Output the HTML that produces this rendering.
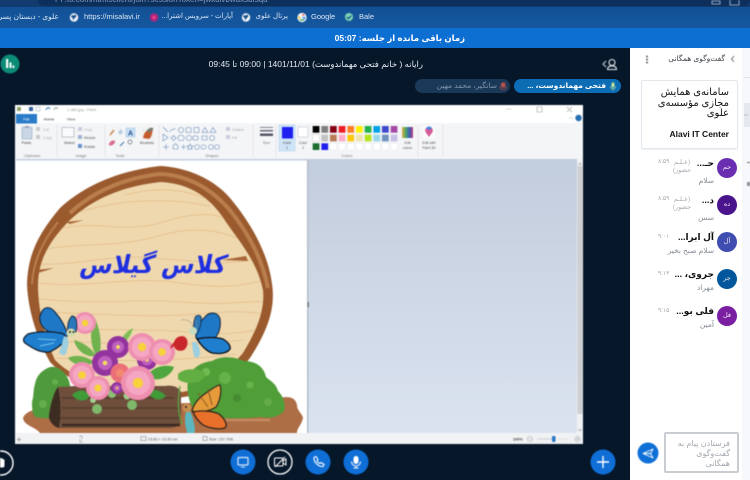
<!DOCTYPE html>
<html lang="fa">
<head>
<meta charset="utf-8">
<title>کلاس</title>
<style>
html,body{margin:0;padding:0;width:750px;height:480px;overflow:hidden;background:#06172a;font-family:"Liberation Sans","DejaVu Sans",sans-serif}
.a{position:absolute;white-space:nowrap;line-height:1}
.r{direction:rtl;text-align:right}
#art{position:absolute;left:0;top:0;filter:blur(.4px)}
.bm{color:#dbe6f2;font-size:7.5px;top:13px}
.nm{color:#111;font-weight:bold;font-size:9px;right:36px}
.ms{color:#868c93;font-size:7.5px;right:36px}
.tm{color:#a3a8ae;font-size:6px;left:658px}
.st{color:#a8adb3;font-size:6.5px;line-height:8px;left:667px;width:30px;white-space:normal;text-align:center;direction:rtl}
.av{position:absolute;left:717px;width:20px;height:20px;border-radius:50%;color:#f1e9f7;font-size:6.5px;line-height:20px;text-align:center;direction:rtl}
</style>
</head>
<body>
<!-- browser chrome -->
<div class="a" style="left:0;top:0;width:750px;height:7px;background:#123c70"></div>
<div class="a" style="left:38px;top:-6px;width:712px;height:12px;border-radius:6px;background:#0d2f5c"></div>
<div class="a" style="left:55px;top:-4px;color:#7f9bbd;font-size:8px">PP.to.com/html5client/join?sessionToken=jwkdlvbwdxsdfsqa</div>
<div class="a" style="left:0;top:7px;width:750px;height:21px;background:linear-gradient(#135095,#15589f)"></div>
<div class="a" style="left:0;top:28px;width:750px;height:20px;background:#0e6fd3"></div>

<div class="a r bm" style="right:691px;width:62px;overflow:hidden">علوی - دبستان پسرانه</div>
<div class="a bm" style="left:84px">https://misalavi.ir</div>
<div class="a r bm" style="left:163px;width:70px;font-size:7px">آپارات - سرویس اشترا...</div>
<div class="a r bm" style="left:254px;width:34px;font-size:7px">پرتال علوی</div>
<div class="a bm" style="left:311px">Google</div>
<div class="a bm" style="left:359px">Bale</div>

<div class="a r" style="left:300px;width:165px;top:34px;color:#fff;font-size:8.5px;font-weight:bold">زمان باقی مانده از جلسه: 05:07</div>

<!-- sidebar -->
<div class="a" style="left:630px;top:48px;width:112px;height:432px;background:#fff"></div>
<div class="a" style="left:742px;top:48px;width:8px;height:432px;background:#f6f8fb"></div>
<div class="a" style="left:744px;top:77px;width:6px;height:1px;background:#dfe3e9"></div>
<div class="a" style="left:744px;top:103px;width:6px;height:24px;background:#e4e8ef"></div>

<div class="a" style="left:660px;top:55px;width:65px;text-align:right;direction:rtl;color:#3d4248;font-size:7.5px">گفت‌وگوی همگانی</div>

<div class="a" style="left:641px;top:80px;width:95px;height:67px;border:1px solid #e3e6ea;border-radius:2px;box-shadow:0 1px 1px #eceff2"></div>
<div class="a r" style="left:645px;width:84px;top:88px;color:#111316;font-size:10px;line-height:10.5px;white-space:normal">سامانه‌ی همایش<br>مجازی مؤسسه‌ی<br>علوی</div>
<div class="a" style="left:645px;width:84px;top:130px;text-align:right;color:#111316;font-size:8.5px;font-weight:bold">Alavi IT Center</div>

<!-- messages -->
<div class="av" style="top:158px;background:#6a2fb0">حم</div>
<div class="a r nm" style="top:159px">حـ...</div>
<div class="a st" style="top:159px">(عـلـم حضور)</div>
<div class="a tm" style="top:159px">۸:۵۹</div>
<div class="a r ms" style="top:177px">سلام</div>

<div class="av" style="top:195px;background:#4a148c">ده</div>
<div class="a r nm" style="top:196px">د...</div>
<div class="a st" style="top:196px">(عـلـم حضور)</div>
<div class="a tm" style="top:196px">۸:۵۹</div>
<div class="a r ms" style="top:214px">سس</div>

<div class="av" style="top:232px;background:#3f4db0">آل</div>
<div class="a r nm" style="top:233px">آل ابرا...</div>
<div class="a tm" style="top:234px">۹:۰۱</div>
<div class="a r ms" style="top:247px">سلام صبح بخیر</div>

<div class="av" style="top:269px;background:#01579b">جر</div>
<div class="a r nm" style="top:270px">جروی، ...</div>
<div class="a tm" style="top:271px">۹:۱۳</div>
<div class="a r ms" style="top:284px">مهراد</div>

<div class="av" style="top:306px;background:#7b1fa2">فل</div>
<div class="a r nm" style="top:307px">فلی بو...</div>
<div class="a tm" style="top:308px">۹:۱۵</div>
<div class="a r ms" style="top:321px">آمین</div>

<div class="a" style="left:664px;top:432px;width:71px;height:37px;border:2px solid #c9cdd2;border-radius:2px;background:#fff"></div>
<div class="a r" style="left:668px;width:62px;top:439px;color:#a3a8ae;font-size:8px;line-height:10px;white-space:normal">فرستادن پیام به<br>گفت‌وگوی<br>همگانی</div>

<!-- header -->
<div class="a" dir="rtl" style="left:195px;width:228px;top:60px;text-align:right;color:#e6ebf0;font-size:8.5px">رایانه ( خانم فتحی مهماندوست) 1401/11/01 | 09:00 تا 09:45</div>

<div class="a" style="left:514px;top:79px;width:107px;height:14px;border-radius:7px;background:#0c6cb4"></div>
<div class="a r" style="left:522px;width:84px;top:82px;color:#fff;font-size:7.5px;font-weight:bold">فتحی مهماندوست، ...</div>
<div class="a" style="left:415px;top:79px;width:95px;height:14px;border-radius:7px;background:#1a3857"></div>
<div class="a r" style="left:420px;width:77px;top:82px;color:#7f95ad;font-size:7.5px">ساتگیر، محمد مهین</div>

<svg id="art" width="750" height="480" viewBox="0 0 750 480" xmlns="http://www.w3.org/2000/svg" font-family="Liberation Sans, DejaVu Sans, sans-serif">
<defs>
<linearGradient id="gr" x1="0" y1="0" x2="0" y2="1"><stop offset="0" stop-color="#c2cddd"/><stop offset="1" stop-color="#dbe3f0"/></linearGradient>
<linearGradient id="rb" x1="0" y1="0" x2="1" y2="0"><stop offset="0" stop-color="#e2b13c"/><stop offset=".35" stop-color="#4aa56a"/><stop offset=".7" stop-color="#3d59b8"/><stop offset="1" stop-color="#c43d7a"/></linearGradient>
<clipPath id="inner"><path d="M160 182C185 183 208 193 226 222C242 245 257 262 263 290C265 310 257 330 243 353C215 385 190 395 160 393C120 392 80 385 55 360C46 340 38 312 38 285C38 260 50 240 70 220C95 197 125 186 160 182Z"/></clipPath>
<g id="fl"><circle r="1" fill="#ee8fb0"/><circle r=".72" fill="#f4a6c2"/><circle r=".3" fill="#f7d23c"/></g>
<g id="pf"><circle r="1" fill="#93339e"/><circle r=".55" fill="#bd5fbe"/><circle r=".18" fill="#f0dc60"/></g>
</defs>

<!-- bookmark icons -->
<circle cx="349" cy="17" r="4" fill="#7fd6b0"/><path d="M347 17l1.500 1.600 2.800-3" stroke="#134c8e" fill="none" stroke-width="1.200"/>
<circle cx="302" cy="17.500" r="4.600" fill="#fff"/><path d="M302 14.600a3 3 0 0 1 2.200.9" stroke="#e04a3a" stroke-width="1.300" fill="none"/><path d="M299.600 16a3 3 0 0 0 0 3" stroke="#f2b90f" stroke-width="1.300" fill="none"/><path d="M300 19.400a3 3 0 0 0 4 0" stroke="#2fa64d" stroke-width="1.300" fill="none"/><path d="M302 17.500h2.800a3 3 0 0 1-.8 2" stroke="#4285f4" stroke-width="1.200" fill="none"/>
<circle cx="246" cy="17.500" r="4.200" fill="#f2f4f7"/><path d="M244 15l2 .6 1.600-1.500.6 2.500-2 2-1 1.800-.6-2.600-1.600-1Z" fill="#134c8e"/>
<circle cx="154" cy="17.500" r="4.200" fill="#b0257f"/><circle cx="154" cy="17.500" r="1.600" fill="#e8487f"/>
<circle cx="74" cy="17.500" r="4.200" fill="#f2f4f7"/><path d="M72 15l2 .6 1.600-1.500.6 2.500-2 2-1 1.800-.6-2.600-1.600-1Z" fill="#134c8e"/>
<path d="M712 1h8v3h-8z M730 0v5h9V0" stroke="#b7c7da" fill="none" stroke-width=".8"/>

<!-- top left app button -->
<circle cx="10" cy="64" r="9.500" fill="#0c8b76"/>
<path d="M6 59v9h2.200v-9Z M9.500 62.500v5.500h2v-5.500Z M12.500 65.500v2.500h1.800v-2.500Z" fill="#fff"/>

<!-- header user -->
<path d="M606 61l-3 3 3 3" stroke="#e3e8ee" stroke-width=".9" fill="none"/>
<circle cx="612" cy="62.500" r="3" stroke="#e3e8ee" stroke-width="1.100" fill="none"/>
<path d="M607.500 69.500c0-2.600 2-3.600 4.500-3.600s4.500 1 4.500 3.600Z" stroke="#e3e8ee" stroke-width="1.100" fill="none"/>
<rect x="611.500" y="82.500" width="3" height="5" rx="1.500" fill="#c5e89a"/><path d="M610.500 86.500a2.500 2.500 0 0 0 5 0M613 89v1.400" stroke="#c5e89a" stroke-width=".7" fill="none"/>
<rect x="501" y="82.500" width="4.500" height="5" rx="1.500" fill="#b6504e"/><path d="M500 86.500a3.200 3.200 0 0 0 6.400 0" stroke="#b6504e" stroke-width=".8" fill="none"/>

<!-- sidebar icons -->
<path d="M734 56l-2.500 3 2.500 3" stroke="#555" stroke-width=".8" fill="none"/>
<circle cx="647" cy="56.500" r=".9" fill="#333"/><circle cx="647" cy="59.500" r=".9" fill="#333"/><circle cx="647" cy="62.500" r=".9" fill="#333"/>
<circle cx="747" cy="115" r=".5" fill="#777"/><circle cx="745" cy="115" r=".5" fill="#777"/>
<rect x="747" y="162" width="3" height="1" fill="#666"/><rect x="747" y="182" width="3" height="4" fill="#8b9096"/>
<circle cx="648" cy="453" r="10.500" fill="#0e6fd6"/>
<path d="M643 453.500l10-4.500-2.500 4.500 2.500 4.500Z M650.500 453.500h-7" stroke="#fff" stroke-width=".9" fill="none" stroke-linejoin="round"/>

<!-- bottom buttons -->
<circle cx="1" cy="463" r="12" fill="none" stroke="#fff" stroke-width="1.400"/>
<path d="M-3 466v-5h1.500v-2.500h1.500v-.5h1.500v.5h1.500v1h1.500v6.500l-1 1.500h-4.500Z" fill="#fff"/>
<circle cx="243" cy="462" r="12.500" fill="#0f6fd7"/>
<rect x="238" y="457.500" width="10" height="7.500" rx="1" fill="none" stroke="#d6e8fb" stroke-width="1.200"/><path d="M241 467h4" stroke="#d6e8fb" stroke-width="1"/>
<circle cx="280" cy="462" r="12" fill="#06172a" stroke="#fff" stroke-width="1.300"/>
<rect x="274.500" y="458" width="8.500" height="8" rx="1" fill="none" stroke="#fff" stroke-width="1"/><path d="M283 461l3-2v6l-3-2M275 467l10-10" stroke="#fff" stroke-width="1" fill="none"/>
<circle cx="318" cy="462" r="12.500" fill="#0f6fd7"/>
<path d="M314 457.500l2-1 2 3-1 1.200c.5 1.300 1.500 2.300 2.800 2.800l1.200-1 3 2-1 2c-4.500.5-9.500-4.500-9-9Z" fill="none" stroke="#fff" stroke-width="1.100" stroke-linejoin="round"/>
<circle cx="356" cy="462" r="12.500" fill="#0f6fd7"/>
<rect x="353.500" y="456" width="5" height="8" rx="2.500" fill="#fff"/><path d="M351.500 461.500a4.500 4.500 0 0 0 9 0M356 466v2M353.500 468h5" stroke="#fff" stroke-width="1" fill="none"/>
<circle cx="603" cy="462" r="12.500" fill="#0f6fd7"/>
<path d="M597 462h12M603 456v12" stroke="#fff" stroke-width="1.400"/>

<!-- shared screen -->
<rect x="15" y="105" width="568" height="339" fill="#f4f5f7"/>
<rect x="15" y="105" width="568" height="9" fill="#fff"/>
<rect x="16" y="114" width="561" height="9" fill="#fff"/>
<rect x="16" y="114" width="21" height="9.500" fill="#2a7bc8"/>
<text x="26.500" y="120.500" font-size="4" fill="#fff" text-anchor="middle">File</text>
<text x="49" y="120.500" font-size="4" fill="#333" text-anchor="middle">Home</text>
<text x="71" y="120.500" font-size="4" fill="#555" text-anchor="middle">View</text>
<text x="67" y="111" font-size="4" fill="#9a9a9a">1.380.jpg - Paint</text>
<rect x="17" y="107" width="4" height="4" fill="#8fa36a"/><rect x="29" y="107" width="4" height="4" fill="#35609e"/><rect x="36" y="107" width="4" height="4" fill="none" stroke="#9aa" stroke-width=".5"/><path d="M46 110c1-3 3-3 4-1" stroke="#3a7bc0" fill="none"/><path d="M54 110c1-3 3-3 4-1" stroke="#9aa" fill="none"/>
<path d="M537 107h5v5h-5Z M567 107l5 5M572 107l-5 5" stroke="#9a9a9a" fill="none" stroke-width=".6"/><path d="M506 109h5" stroke="#bbb" stroke-width=".6"/>
<circle cx="578.500" cy="118" r="3.200" fill="#2a6db5"/><path d="M569 119l2-2 2 2" stroke="#aaa" fill="none" stroke-width=".5"/>

<!-- ribbon sep -->
<g stroke="#e0e2e6" stroke-width=".7"><path d="M57 125v32M105 125v32M159 125v32M253 125v32M276 125v32M418 125v32M443 125v32"/></g>
<!-- clipboard -->
<rect x="22" y="127" width="10" height="12" rx="1" fill="#c9d6e6" stroke="#8fa4be" stroke-width=".6"/><rect x="25" y="126" width="4" height="2" fill="#9aa6b6"/>
<text x="26.500" y="144" font-size="3.800" fill="#444" text-anchor="middle">Paste</text>
<text x="43" y="131" font-size="3.800" fill="#aaa">Cut</text><text x="43" y="139" font-size="3.800" fill="#aaa">Copy</text>
<rect x="36" y="127" width="4" height="4" fill="#ccc"/><rect x="36" y="135" width="4" height="4" fill="#ccc"/>
<text x="32" y="157" font-size="3.800" fill="#777" text-anchor="middle">Clipboard</text>
<!-- image -->
<rect x="62" y="127.500" width="12" height="9.500" fill="#fafbfc" stroke="#8a94a0" stroke-width=".5"/>
<text x="64" y="144" font-size="3.800" fill="#444">Select</text>
<text x="84" y="131" font-size="3.800" fill="#aaa">Crop</text><text x="84" y="139" font-size="3.800" fill="#555">Resize</text><text x="84" y="148" font-size="3.800" fill="#555">Rotate</text>
<rect x="78" y="127" width="4" height="4" fill="#ccd"/><rect x="78" y="135" width="4" height="4" fill="#9db4d0"/><rect x="78" y="144" width="4" height="4" fill="#6a94c8"/>
<text x="81" y="157" font-size="3.800" fill="#777" text-anchor="middle">Image</text>
<!-- tools -->
<path d="M110 135l4-5" stroke="#c98a4c" stroke-width="1.500"/><path d="M118 132l3-3 2 3-3 3Z" fill="#b7cde0"/>
<rect x="126" y="128" width="9" height="9" fill="#c8e0f5" stroke="#8bb8de" stroke-width=".4"/><text x="130.500" y="135.500" font-size="7" font-weight="bold" fill="#1f4f8f" text-anchor="middle">A</text>
<ellipse cx="112" cy="143" rx="3.500" ry="2" fill="#d9708e" transform="rotate(-35 112 143)"/><path d="M120 146l4-4" stroke="#4a7fb0" stroke-width="1.200"/><circle cx="130" cy="142" r="2" fill="none" stroke="#667" stroke-width=".7"/>
<text x="120" y="157" font-size="3.800" fill="#777" text-anchor="middle">Tools</text>
<rect x="142" y="127" width="12" height="13" fill="#f0f0f0"/><path d="M143 138c1-6 5-10 10-10-1 5-1 9-4 11Z" fill="#c65a2d"/><ellipse cx="150" cy="130" rx="3.500" ry="1.800" fill="#7a7a70" transform="rotate(-30 150 130)"/>
<text x="147" y="144" font-size="3.800" fill="#444" text-anchor="middle">Brushes</text>
<!-- shapes -->
<g fill="none" stroke="#5e86b4" stroke-width=".55">
<path d="M163 127l5 5M170 132c1-5 3 0 5-4"/><circle cx="181" cy="130" r="2.600"/><rect x="186" y="127.500" width="5" height="5" rx="1"/><rect x="194" y="127.500" width="5" height="5"/><path d="M202 132.500l3-5 3 5Z M210 132.500l3-5 3 5Z"/>
<path d="M163 134v7l5-3.500Z M171 138l2.500-2.500 2.500 2.500-2.500 2.500Z"/><path d="M179 135.500h4l1.500 2.500-1.500 2.500h-4l-1.500-2.500Z"/><circle cx="189" cy="138" r="2.600"/><rect x="193" y="136" width="5" height="4" rx="1"/><path d="M202 136h5v4h-5Z"/><circle cx="212" cy="138" r="2.500"/>
<path d="M166 144v6M163 147h6M173 146l2.500-2.500 2.500 2.500v3h-5Z M181 147h5M183.500 144.500v5"/><path d="M190 144l1 2h2l-1.500 1.500.5 2-2-1-2 1 .5-2L187 146h2Z"/><circle cx="197" cy="147" r="2.400"/><rect x="201" y="145" width="5" height="4" rx="2"/><circle cx="211" cy="147" r="2.400"/><circle cx="217" cy="147" r="2.400"/>
</g>
<text x="212" y="157" font-size="3.800" fill="#777" text-anchor="middle">Shapes</text>
<text x="232" y="131" font-size="3.800" fill="#aaa">Outline</text><text x="232" y="139" font-size="3.800" fill="#aaa">Fill</text>
<rect x="226" y="127" width="4" height="4" fill="#ccd"/><rect x="226" y="135" width="4" height="4" fill="#ccd"/>
<rect x="260" y="127" width="13" height=".8" fill="#667"/><rect x="260" y="130" width="13" height="1.500" fill="#667"/><rect x="260" y="133.500" width="13" height="2.500" fill="#556"/>
<text x="266.500" y="144" font-size="3.800" fill="#777" text-anchor="middle">Size</text>
<!-- colors -->
<rect x="279" y="125" width="16" height="26" fill="#cfe5f7" stroke="#a9cfee" stroke-width=".5"/>
<rect x="282" y="127" width="11" height="11.500" fill="#1f1ff0"/>
<text x="287" y="144" font-size="3.500" fill="#444" text-anchor="middle">Color</text><text x="287" y="149" font-size="3.500" fill="#444" text-anchor="middle">1</text>
<rect x="298" y="127" width="10" height="10" fill="#fff" stroke="#c2c6cc" stroke-width=".6"/>
<text x="303" y="144" font-size="3.500" fill="#555" text-anchor="middle">Color</text><text x="303" y="149" font-size="3.500" fill="#555" text-anchor="middle">2</text>
<g id="pal">
<rect x="312.700" y="126" width="6.700" height="6.700" fill="#000"/><rect x="321.400" y="126" width="6.700" height="6.700" fill="#7f7f7f"/><rect x="330" y="126" width="6.700" height="6.700" fill="#880015"/><rect x="338.700" y="126" width="6.700" height="6.700" fill="#ed1c24"/><rect x="347.400" y="126" width="6.700" height="6.700" fill="#ff7f27"/><rect x="356" y="126" width="6.700" height="6.700" fill="#fff200"/><rect x="364.700" y="126" width="6.700" height="6.700" fill="#22b14c"/><rect x="373.400" y="126" width="6.700" height="6.700" fill="#00a2e8"/><rect x="382" y="126" width="6.700" height="6.700" fill="#3f48cc"/><rect x="390.700" y="126" width="6.700" height="6.700" fill="#a349a4"/>
<rect x="312.700" y="134.700" width="6.700" height="6.700" fill="#fff" stroke="#ccc" stroke-width=".4"/><rect x="321.400" y="134.700" width="6.700" height="6.700" fill="#c3c3c3"/><rect x="330" y="134.700" width="6.700" height="6.700" fill="#b97a57"/><rect x="338.700" y="134.700" width="6.700" height="6.700" fill="#ffaec9"/><rect x="347.400" y="134.700" width="6.700" height="6.700" fill="#ffc90e"/><rect x="356" y="134.700" width="6.700" height="6.700" fill="#efe4b0"/><rect x="364.700" y="134.700" width="6.700" height="6.700" fill="#b5e61d"/><rect x="373.400" y="134.700" width="6.700" height="6.700" fill="#99d9ea"/><rect x="382" y="134.700" width="6.700" height="6.700" fill="#7092be"/><rect x="390.700" y="134.700" width="6.700" height="6.700" fill="#c8bfe7"/>
<rect x="312.700" y="143.300" width="6.700" height="6.700" fill="#1b6e2f"/><rect x="321.400" y="143.300" width="6.700" height="6.700" fill="#1f1ff0"/>
<g fill="#fff" stroke="#e2e4e8" stroke-width=".4"><rect x="330" y="143.300" width="6.700" height="6.700"/><rect x="338.700" y="143.300" width="6.700" height="6.700"/><rect x="347.400" y="143.300" width="6.700" height="6.700"/><rect x="356" y="143.300" width="6.700" height="6.700"/><rect x="364.700" y="143.300" width="6.700" height="6.700"/><rect x="373.400" y="143.300" width="6.700" height="6.700"/><rect x="382" y="143.300" width="6.700" height="6.700"/><rect x="390.700" y="143.300" width="6.700" height="6.700"/></g>
</g>
<text x="347" y="157" font-size="3.800" fill="#777" text-anchor="middle">Colors</text>
<rect x="402" y="127" width="11" height="11" fill="url(#rb)"/>
<text x="407.500" y="144" font-size="3.500" fill="#555" text-anchor="middle">Edit</text><text x="407.500" y="149" font-size="3.500" fill="#555" text-anchor="middle">colors</text>
<rect x="423" y="126" width="12" height="12" fill="#fbfbfc"/><path d="M429 137l-3.500-5a3.800 3.800 0 1 1 7 0Z" fill="#d55a98"/><path d="M426 128a3.800 3.800 0 0 1 6 0l-3 2Z" fill="#3f8be0"/>
<text x="429" y="144" font-size="3.500" fill="#555" text-anchor="middle">Edit with</text><text x="429" y="149" font-size="3.500" fill="#555" text-anchor="middle">Paint 3D</text>

<!-- work area -->
<rect x="16" y="159" width="561" height="274" fill="url(#gr)"/>
<rect x="577" y="159" width="6" height="274" fill="#f0f1f3"/>
<rect x="577.500" y="166" width="5" height="248" fill="#cdcfd3"/>
<path d="M578.500 165l1.500-2 1.500 2M578.500 429l1.500 2 1.500-2" stroke="#666" stroke-width=".5" fill="none"/>
<rect x="16" y="160.500" width="291" height="273" fill="#fff"/>
<rect x="307" y="160" width="1.500" height="273" fill="#b3bdca"/>
<rect x="307.500" y="302" width="1.500" height="5" fill="#777"/>

<!-- artwork -->
<path d="M160 166C185 167 213 178 230 198C250 222 268 252 272 284C276 310 266 333 250 358C225 390 190 400 160 398C115 397 75 388 50 362C38 340 28 312 27 284C28 252 40 232 60 208C88 182 125 170 160 166Z" fill="#9a5a2e"/>
<path d="M70 213C95 190 125 178 160 174C185 175 208 186 228 208C248 232 262 258 268 288" fill="none" stroke="#b97e4c" stroke-width="4"/>
<path d="M32 284C33 262 42 242 58 222" fill="none" stroke="#b97e4c" stroke-width="2"/>
<path d="M160 182C185 183 208 193 226 222C242 245 257 262 263 290C265 310 257 330 243 353C215 385 190 395 160 393C120 392 80 385 55 360C46 340 38 312 38 285C38 260 50 240 70 220C95 197 125 186 160 182Z" fill="#f0d8ae"/>
<g clip-path="url(#inner)" fill="none" stroke="#e4c392" stroke-width="1">
<path d="M60 218c40-14 90-24 150-12"/><path d="M48 232c50-16 70 4 115-10s60-6 75 4"/><path d="M38 250c45-8 80-2 120-14s70-4 92 8"/><path d="M34 264c50 2 70-10 120-6s70 8 110 0"/><path d="M33 282c40 8 100-6 140 0s60 6 92-2"/><path d="M33 298c60 8 100 0 150 4s60-2 84 0"/><path d="M36 312c70 2 110 6 160 2s50-2 70 0"/><path d="M38 326c60 6 110 2 150 6s50 0 72-2"/><path d="M44 342c50-2 110 8 200-2"/><path d="M56 358c60 4 120 4 180-4"/><path d="M125 195c30-8 60-8 90 8"/>
<path d="M66 222l18-2-14 4Z M36 270l18-2-16 5Z M246 256l-24 4 26 1Z" fill="#a9673a" stroke="none"/>
</g>
<!-- ground -->
<path d="M23 418c3-8 14-9 28-10l220-8c14-4 24-5 26 5 0 6 5 8 6 13-2 8-6 10-6 15H40c-4-6-16-7-17-15Z" fill="#ad6d45"/>
<path d="M60 424h90M200 420h70" stroke="#c58a60" stroke-width="2.500"/>
<!-- bushes -->
<path d="M32 402c2-6 1-12 3-18 2-10 8-14 15-17 8-2 18 6 20 18v30c-10 4-25 4-35 2-3-4-3-10-3-15Z" fill="#4f9a3c"/>
<circle cx="43" cy="404" r="4" fill="#66ad4b"/><circle cx="55" cy="382" r="3" fill="#66ad4b"/>
<path d="M188 380c2-12 14-18 24-19 10-6 24-4 32 0 12 0 20 6 22 16 4 4 10 6 12 14 6 6 8 14 6 20-8 8-16 7-24 6-18 2-40 2-60-2-10-6-14-22-12-35Z" fill="#4f9e38"/>
<circle cx="225" cy="378" r="6" fill="#66b24a"/><circle cx="250" cy="385" r="3.500" fill="#68b34c"/><circle cx="237" cy="398" r="4" fill="#468c33"/><circle cx="268" cy="402" r="4" fill="#62ab47"/><circle cx="206" cy="372" r="4" fill="#72bb54"/>
<path d="M178 374c6-6 18-6 27-2 2 4-3 8-6 10-8 2-17 1-21-3Z" fill="#62ae42"/>
<!-- log -->
<path d="M58 387c-5 6-9 24-9 31 2 6 6 9 10 10h110c8 0 12-3 12-9v-27c-3-6-10-7-16-6H75Z" fill="#6f4f3c"/>
<path d="M49 418c2 6 6 9 10 10 2-14 2-28-1-41-5 6-9 24-9 31Z" fill="#3d2c22"/>
<path d="M62 398h112M62 408h118M60 418h120" stroke="#573d2e" stroke-width="1.800" fill="none"/>
<path d="M62 425h118" stroke="#3b2a20" stroke-width="2.500"/>
<!-- leaves -->
<path d="M95 318c4 10 8 22 4 42-8-10-11-28-4-42Z M74 340c8 2 18 8 22 16-10 2-20-6-22-16Z M68 358c8-4 18-2 26 4-8 6-20 4-26-4Z" fill="#70b24e"/>
<path d="M133 328c-2 8-6 14-14 18 2-8 6-14 14-18Z" fill="#7fbf57"/>
<path d="M150 372c6-5 14-8 24-5-2 7-12 14-20 12Z" fill="#4fa63f"/>
<path d="M72 395c6-6 12-6 18 0-2 7-12 8-18 0Z M148 392c6-4 12-2 18 4-6 6-14 4-18-4Z" fill="#3f9a38"/>
<circle cx="97" cy="409" r="5" fill="#7fb86a"/><circle cx="132" cy="405" r="5" fill="#7fb86a"/><circle cx="93" cy="400" r="3" fill="#a5cf90"/><circle cx="127" cy="396" r="3.500" fill="#9fc98a"/><circle cx="112" cy="394" r="4" fill="#8cc076"/>
<!-- flowers -->
<use href="#pf" transform="translate(118 347) scale(11)"/>
<use href="#pf" transform="translate(105 363) scale(13)"/>
<use href="#pf" transform="translate(147 360) scale(10)"/>
<use href="#pf" transform="translate(117 388) scale(6)"/>
<use href="#fl" transform="translate(85 323) scale(11)"/>
<use href="#fl" transform="translate(142 347) scale(14)"/>
<use href="#fl" transform="translate(162 352) scale(13)"/>
<circle cx="120" cy="373" r="9.500" fill="#ec6f78"/><circle cx="120" cy="373" r="4" fill="#f28a70"/>
<use href="#fl" transform="translate(82 375) scale(13)"/>
<use href="#fl" transform="translate(98 388) scale(12)"/>
<use href="#fl" transform="translate(138 383) scale(17)"/>
<!-- left butterfly -->
<path d="M68 336c-2-8-6-16-13-24-5-6-11-6-14 1-3 7 0 13 5 17 7 5 14 8 22 6Z" fill="#1f78c6" stroke="#15283f" stroke-width="1.100"/>
<path d="M68 334c-1-7 0-14 4-18 4 0 6 6 4 16Z" fill="#2a78bc" stroke="#15283f" stroke-width=".9"/>
<path d="M64 334c-10-3-26-3-36 0-4 3-6 6-3 9 6 4 14 10 24 9 6-2 14-8 17-13Z" fill="#1f7fce" stroke="#101d2f" stroke-width="1.300"/>
<path d="M38 339l18 1M40 346l14-3" stroke="#7ac0ea" stroke-width="1" fill="none"/>
<path d="M64 336c-2 8-4 14-5 17 5 4 8 2 8-4 2-4 2-9 0-12Z" fill="#9ccfdf"/>
<circle cx="71" cy="333" r="4.500" fill="#d5dcae"/><circle cx="70" cy="332" r="1" fill="#222"/><circle cx="73.500" cy="332" r="1" fill="#222"/>
<!-- right butterfly -->
<path d="M196 338c-1-8 3-16 9-21 5-6 13-5 15 2 1 8-1 15-6 20-6 2-12 2-18-1Z" fill="#1f78c6" stroke="#15283f" stroke-width="1.100"/>
<path d="M196 335c-3-6-3-14 0-19 4-2 6 0 5 5 0 5-2 10-5 14Z" fill="#2a78bc" stroke="#15283f" stroke-width=".8"/>
<path d="M197 339c8-2 20-2 26 0 5 3 8 7 7 10-3 5-12 5-18 4-6-2-12-9-15-14Z" fill="#1f7fce" stroke="#0b0f16" stroke-width="1.300"/>
<path d="M192 342c0 5 1 10 2 14 3 4 7 0 6-4 0-4-2-8-4-10Z" fill="#9ccfdf"/>
<circle cx="193" cy="331" r="4" fill="#c9dcc0"/>
<path d="M193 327c-1-6-7-8-12-7M197 327c0-4-1-8-4-10" stroke="#8a8f80" stroke-width=".5" fill="none"/>
<path d="M174 342c2-6 8-7 11-5 4 3 3 10-1 13-5 2-9 0-10-4l-4 3 1-3Z" fill="#c9262c"/>
<!-- orange butterfly -->
<g transform="translate(0 9)">
<path d="M192 402c2-8 8-14 14-18 6-4 11-8 14-8 2 6 0 16-4 22-6 4-16 6-24 4Z" fill="#e79a3a" stroke="#2b2018" stroke-width="1.100"/>
<path d="M198 384l10 14M208 380l4 16" stroke="#8a5a20" stroke-width="1" fill="none"/>
<path d="M193 403c8-2 20-1 26 2 6 5 9 11 6 14-6 2-16 0-22-3-5-4-8-8-10-13Z" fill="#e8702a" stroke="#2b2018" stroke-width="1.200"/>
<path d="M186 402c-2 8-1 16 2 24 4 2 7-2 7-6-1-6-2-12-5-18Z" fill="#5db7c0"/>
<circle cx="187" cy="399" r="4.500" fill="#c58f4f"/><circle cx="186" cy="398" r="1" fill="#222"/>
</g>
<path d="M180 386c-2 12-3 26 2 38" stroke="#5aa63e" stroke-width="1.300" fill="none"/>

<!-- status bar -->
<rect x="16" y="433" width="561" height="11" fill="#f1f2f4"/><rect x="577" y="433" width="6" height="11" fill="#f1f2f4"/>
<g font-size="3.800" fill="#555">
<path d="M19 437.500v4M17 439.500h4" stroke="#888" stroke-width=".7"/>
<path d="M79 436h3v3M83 442h-3v-3" stroke="#888" stroke-width=".6" fill="none"/>
<rect x="141" y="436.500" width="5" height="4" fill="none" stroke="#777" stroke-width=".5"/><text x="148" y="440.500">23.83 × 23.30 cm</text>
<rect x="203" y="436.500" width="4" height="4" fill="none" stroke="#777" stroke-width=".5"/><text x="209" y="440.500">Size: 137.7KB</text>
<text x="513" y="440.500" font-weight="bold" fill="#444">100%</text>
</g>
<circle cx="530" cy="439" r="2.600" fill="none" stroke="#999" stroke-width=".5"/><path d="M528.500 439h3M537 439h19" stroke="#aaa" stroke-width=".5"/>
<rect x="552" y="436" width="3.500" height="6" rx="1" fill="#2a7bc8"/>
<path d="M558 439h10" stroke="#ccc" stroke-width=".5"/>
<circle cx="577.500" cy="439" r="2.600" fill="none" stroke="#999" stroke-width=".5"/><path d="M576 439h3M577.500 437.500v3" stroke="#999" stroke-width=".5"/>
<!-- blue title -->
<text x="152" y="273" font-size="25" font-weight="bold" fill="#1f2fe0" text-anchor="middle" direction="rtl" font-family="DejaVu Sans, sans-serif" textLength="146" lengthAdjust="spacingAndGlyphs" transform="skewX(-12) translate(58 0)">کلاس گیلاس</text>
</svg>
</body>
</html>
